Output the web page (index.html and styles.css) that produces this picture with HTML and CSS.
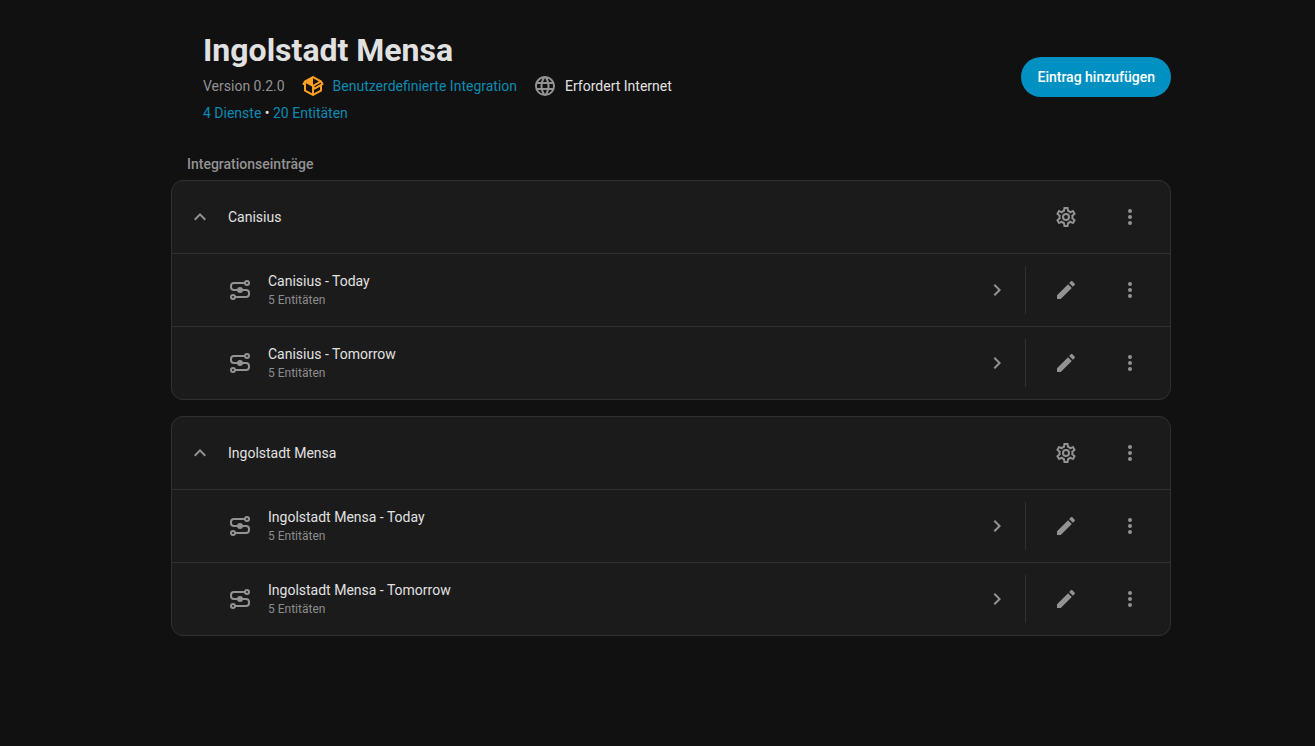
FILE: index.html
```html
<!DOCTYPE html>
<html lang="de">
<head>
  <meta charset="UTF-8">
  <meta name="viewport" content="width=device-width, initial-scale=1.0">
  <title>Ingolstadt Mensa</title>
  <link rel="stylesheet" href="styles.css">
</head>
<body>
  <!-- shared icons -->
  <svg class="sprite" aria-hidden="true">
    <symbol id="dots" viewBox="0 0 24 24"><path d="M12,16A2,2 0 0,1 14,18A2,2 0 0,1 12,20A2,2 0 0,1 10,18A2,2 0 0,1 12,16M12,10A2,2 0 0,1 14,12A2,2 0 0,1 12,14A2,2 0 0,1 10,12A2,2 0 0,1 12,10M12,4A2,2 0 0,1 14,6A2,2 0 0,1 12,8A2,2 0 0,1 10,6A2,2 0 0,1 12,4Z"/></symbol>
    <symbol id="pencil" viewBox="0 0 24 24"><path d="M20.71,7.04C21.1,6.65 21.1,6 20.71,5.63L18.37,3.29C18,2.9 17.35,2.9 16.96,3.29L15.12,5.12L18.87,8.87M3,17.25V21H6.75L17.81,9.93L14.06,6.18L3,17.25Z"/></symbol>
    <symbol id="up" viewBox="0 0 24 24"><path d="M7.41,15.41L12,10.83L16.59,15.41L18,14L12,8L6,14L7.41,15.41Z"/></symbol>
    <symbol id="next" viewBox="0 0 24 24"><path d="M8.59,16.58L13.17,12L8.59,7.41L10,6L16,12L10,18L8.59,16.58Z"/></symbol>
    <symbol id="cog" viewBox="0 0 24 24"><path d="M12,8A4,4 0 0,1 16,12A4,4 0 0,1 12,16A4,4 0 0,1 8,12A4,4 0 0,1 12,8M12,10A2,2 0 0,0 10,12A2,2 0 0,0 12,14A2,2 0 0,0 14,12A2,2 0 0,0 12,10M10,22C9.75,22 9.54,21.82 9.5,21.58L9.13,18.93C8.5,18.68 7.96,18.34 7.44,17.94L4.95,18.95C4.73,19.03 4.46,18.95 4.34,18.73L2.34,15.27C2.21,15.05 2.27,14.78 2.46,14.63L4.57,12.97L4.5,12L4.57,11L2.46,9.37C2.27,9.22 2.21,8.95 2.34,8.73L4.34,5.27C4.46,5.05 4.73,4.96 4.95,5.05L7.44,6.05C7.96,5.66 8.5,5.32 9.13,5.07L9.5,2.42C9.54,2.18 9.75,2 10,2H14C14.25,2 14.46,2.18 14.5,2.42L14.87,5.07C15.5,5.32 16.04,5.66 16.56,6.05L19.05,5.05C19.27,4.96 19.54,5.05 19.66,5.27L21.66,8.73C21.79,8.95 21.73,9.22 21.54,9.37L19.43,11L19.5,12L19.43,13L21.54,14.63C21.73,14.78 21.79,15.05 21.66,15.27L19.66,18.73C19.54,18.95 19.27,19.04 19.05,18.95L16.56,17.95C16.04,18.34 15.5,18.68 14.87,18.93L14.5,21.58C14.46,21.82 14.25,22 14,22H10M11.25,4L10.88,6.61C9.68,6.86 8.62,7.5 7.85,8.39L5.44,7.35L4.69,8.65L6.8,10.2C6.4,11.37 6.4,12.64 6.8,13.8L4.68,15.36L5.43,16.66L7.86,15.62C8.63,16.5 9.68,17.14 10.87,17.38L11.24,20H12.76L13.13,17.39C14.32,17.14 15.37,16.5 16.14,15.62L18.57,16.66L19.32,15.36L17.2,13.81C17.6,12.64 17.6,11.37 17.2,10.2L19.31,8.65L18.56,7.35L16.15,8.39C15.38,7.5 14.32,6.86 13.12,6.62L12.75,4H11.25Z"/></symbol>
    <symbol id="web" viewBox="0 0 24 24"><path d="M16.36,14C16.44,13.34 16.5,12.68 16.5,12C16.5,11.32 16.44,10.66 16.36,10H19.74C19.9,10.64 20,11.31 20,12C20,12.69 19.9,13.36 19.74,14M14.59,19.56C15.19,18.45 15.65,17.25 15.97,16H18.92C17.96,17.65 16.43,18.93 14.59,19.56M14.34,14H9.66C9.56,13.34 9.5,12.68 9.5,12C9.5,11.32 9.56,10.65 9.66,10H14.34C14.43,10.65 14.5,11.32 14.5,12C14.5,12.68 14.43,13.34 14.34,14M12,19.96C11.17,18.76 10.5,17.43 10.09,16H13.91C13.5,17.43 12.83,18.76 12,19.96M8,8H5.08C6.03,6.34 7.57,5.06 9.4,4.44C8.8,5.55 8.35,6.75 8,8M5.08,16H8C8.35,17.25 8.8,18.45 9.4,19.56C7.57,18.93 6.03,17.65 5.08,16M4.26,14C4.1,13.36 4,12.69 4,12C4,11.31 4.1,10.64 4.26,10H7.64C7.56,10.66 7.5,11.32 7.5,12C7.5,12.68 7.56,13.34 7.64,14M12,4.03C12.83,5.23 13.5,6.57 13.91,8H10.09C10.5,6.57 11.17,5.23 12,4.03M18.92,8H15.97C15.65,6.75 15.19,5.55 14.59,4.44C16.43,5.07 17.96,6.34 18.92,8M12,2C6.47,2 2,6.5 2,12A10,10 0 0,0 12,22A10,10 0 0,0 22,12A10,10 0 0,0 12,2Z"/></symbol>
    <symbol id="package" viewBox="0 0 24 24"><path d="M2,10.96C1.5,10.68 1.35,10.07 1.63,9.59L3.13,7C3.24,6.8 3.41,6.66 3.6,6.58L11.43,2.18C11.59,2.06 11.79,2 12,2C12.21,2 12.41,2.06 12.57,2.18L20.47,6.62C20.66,6.72 20.82,6.88 20.91,7.08L22.36,9.6C22.64,10.08 22.47,10.69 22,10.96L21,11.54V16.5C21,16.88 20.79,17.21 20.47,17.38L12.57,21.82C12.41,21.94 12.21,22 12,22C11.79,22 11.59,21.94 11.43,21.82L3.53,17.38C3.21,17.21 3,16.88 3,16.5V10.96C2.7,11.13 2.32,11.14 2,10.96M12,4.15V4.15L12,10.85V10.85L17.96,7.5L12,4.15M5,15.91L11,19.29V12.58L5,9.21V15.91M19,15.91V12.69L14,15.59C13.67,15.77 13.3,15.76 13,15.6V19.29L19,15.91M13.85,13.36L20.13,9.73L19.55,8.72L13.27,12.35L13.85,13.36Z"/></symbol>
    <symbol id="service" viewBox="0 0 24 24">
      <g fill="none" stroke="currentColor" stroke-width="2">
        <path d="M17,5H6A3,3 0 0,0 3,8V9A3,3 0 0,0 6,12H18A3,3 0 0,1 21,15V16A3,3 0 0,1 18,19H7"/>
        <circle cx="19" cy="5" r="2"/>
        <circle cx="5" cy="19" r="2"/>
      </g>
      <circle cx="12" cy="12" r="3"/>
    </symbol>
  </svg>

  <main class="content">
    <header class="header">
      <div class="info">
        <h1>Ingolstadt Mensa</h1>
        <div class="meta">
          <span class="version">Version 0.2.0</span>
          <span class="meta-item">
            <svg class="icon custom"><use href="#package"/></svg>
            <a href="#">Benutzerdefinierte Integration</a>
          </span>
          <span class="meta-item">
            <svg class="icon"><use href="#web"/></svg>
            <span>Erfordert Internet</span>
          </span>
        </div>
        <div class="counts"><a href="#">4 Dienste</a> • <a href="#">20 Entitäten</a></div>
      </div>
      <button type="button" class="add-button">Eintrag hinzufügen</button>
    </header>

    <h2>Integrationseinträge</h2>

    <section class="card">
      <div class="entry">
        <button type="button" class="expand" aria-label="Einklappen"><svg class="icon"><use href="#up"/></svg></button>
        <h3>Canisius</h3>
        <div class="actions">
          <button type="button" class="icon-button" aria-label="Konfigurieren"><svg class="icon"><use href="#cog"/></svg></button>
          <button type="button" class="icon-button" aria-label="Menü"><svg class="icon"><use href="#dots"/></svg></button>
        </div>
      </div>
      <div class="device">
        <a class="device-link" href="#">
          <svg class="icon"><use href="#service"/></svg>
          <span class="device-text">
            <span class="name">Canisius - Today</span>
            <span class="entities">5 Entitäten</span>
          </span>
          <svg class="icon"><use href="#next"/></svg>
        </a>
        <div class="actions divided">
          <button type="button" class="icon-button" aria-label="Bearbeiten"><svg class="icon"><use href="#pencil"/></svg></button>
          <button type="button" class="icon-button" aria-label="Menü"><svg class="icon"><use href="#dots"/></svg></button>
        </div>
      </div>
      <div class="device">
        <a class="device-link" href="#">
          <svg class="icon"><use href="#service"/></svg>
          <span class="device-text">
            <span class="name">Canisius - Tomorrow</span>
            <span class="entities">5 Entitäten</span>
          </span>
          <svg class="icon"><use href="#next"/></svg>
        </a>
        <div class="actions divided">
          <button type="button" class="icon-button" aria-label="Bearbeiten"><svg class="icon"><use href="#pencil"/></svg></button>
          <button type="button" class="icon-button" aria-label="Menü"><svg class="icon"><use href="#dots"/></svg></button>
        </div>
      </div>
    </section>

    <section class="card">
      <div class="entry">
        <button type="button" class="expand" aria-label="Einklappen"><svg class="icon"><use href="#up"/></svg></button>
        <h3>Ingolstadt Mensa</h3>
        <div class="actions">
          <button type="button" class="icon-button" aria-label="Konfigurieren"><svg class="icon"><use href="#cog"/></svg></button>
          <button type="button" class="icon-button" aria-label="Menü"><svg class="icon"><use href="#dots"/></svg></button>
        </div>
      </div>
      <div class="device">
        <a class="device-link" href="#">
          <svg class="icon"><use href="#service"/></svg>
          <span class="device-text">
            <span class="name">Ingolstadt Mensa - Today</span>
            <span class="entities">5 Entitäten</span>
          </span>
          <svg class="icon"><use href="#next"/></svg>
        </a>
        <div class="actions divided">
          <button type="button" class="icon-button" aria-label="Bearbeiten"><svg class="icon"><use href="#pencil"/></svg></button>
          <button type="button" class="icon-button" aria-label="Menü"><svg class="icon"><use href="#dots"/></svg></button>
        </div>
      </div>
      <div class="device">
        <a class="device-link" href="#">
          <svg class="icon"><use href="#service"/></svg>
          <span class="device-text">
            <span class="name">Ingolstadt Mensa - Tomorrow</span>
            <span class="entities">5 Entitäten</span>
          </span>
          <svg class="icon"><use href="#next"/></svg>
        </a>
        <div class="actions divided">
          <button type="button" class="icon-button" aria-label="Bearbeiten"><svg class="icon"><use href="#pencil"/></svg></button>
          <button type="button" class="icon-button" aria-label="Menü"><svg class="icon"><use href="#dots"/></svg></button>
        </div>
      </div>
    </section>
  </main>
</body>
</html>
```
FILE: styles.css
```css
* {
  box-sizing: border-box;
}
body {
  margin: 0;
  padding: 32px 0 32px 27px;
  background: #111111;
  color: #e1e1e1;
  font-family: Roboto, "Liberation Sans", sans-serif;
  font-size: 14px;
  line-height: 20px;
}
a {
  color: #0c8ab2;
  text-decoration: none;
}
button {
  border: none;
  background: none;
  padding: 0;
  color: inherit;
  font: inherit;
  cursor: pointer;
}
h1, h2, h3 {
  margin: 0;
}
.sprite {
  display: none;
}
.icon {
  display: block;
  flex: none;
  width: 24px;
  height: 24px;
  color: #939393;
  fill: currentColor;
}
.custom {
  color: #ff9f22;
}
.content {
  max-width: 1000px;
  margin: 0 auto;
}

/* header */
.header {
  display: flex;
  align-items: center;
  justify-content: space-between;
  padding-left: 32px;
}
h1 {
  font-size: 32px;
  line-height: 36px;
  font-weight: 700;
}
.meta {
  display: flex;
  align-items: center;
  flex-wrap: wrap;
  gap: 16px;
  margin-top: 6px;
}
.meta-item {
  display: flex;
  align-items: center;
  gap: 8px;
}
.version {
  color: #939393;
}
.counts {
  margin-top: 6px;
  line-height: 18px;
}
.add-button {
  height: 40px;
  padding: 0 16px;
  border-radius: 20px;
  background: #0091c2;
  color: #fff;
  font-weight: 500;
}

/* config entries */
h2 {
  margin: 32px 16px 6px;
  color: #939393;
  font-size: 14px;
  font-weight: 500;
}
.card {
  margin-bottom: 16px;
  border: 1px solid #313131;
  border-radius: 12px;
  background: #1b1b1b;
}
.entry {
  display: flex;
  align-items: center;
  padding: 12px 16px;
}
.expand {
  margin-right: 16px;
}
h3 {
  flex: 1;
  font-size: 14px;
  font-weight: 400;
}
.device {
  display: flex;
  align-items: center;
  border-top: 1px solid #313131;
  padding: 12px 16px 12px 56px;
}
.device-link {
  display: flex;
  flex: 1;
  align-items: center;
  gap: 16px;
  margin-right: 16px;
  color: inherit;
}
.device-text {
  display: flex;
  flex: 1;
  flex-direction: column;
}
.name {
  line-height: 20px;
}
.entities {
  color: #8c8c8c;
  font-size: 12px;
  line-height: 18px;
}
.actions {
  display: flex;
  gap: 16px;
}
.divided {
  border-left: 1px solid #313131;
  padding-left: 16px;
}
.icon-button {
  display: flex;
  align-items: center;
  justify-content: center;
  width: 48px;
  height: 48px;
}
```
